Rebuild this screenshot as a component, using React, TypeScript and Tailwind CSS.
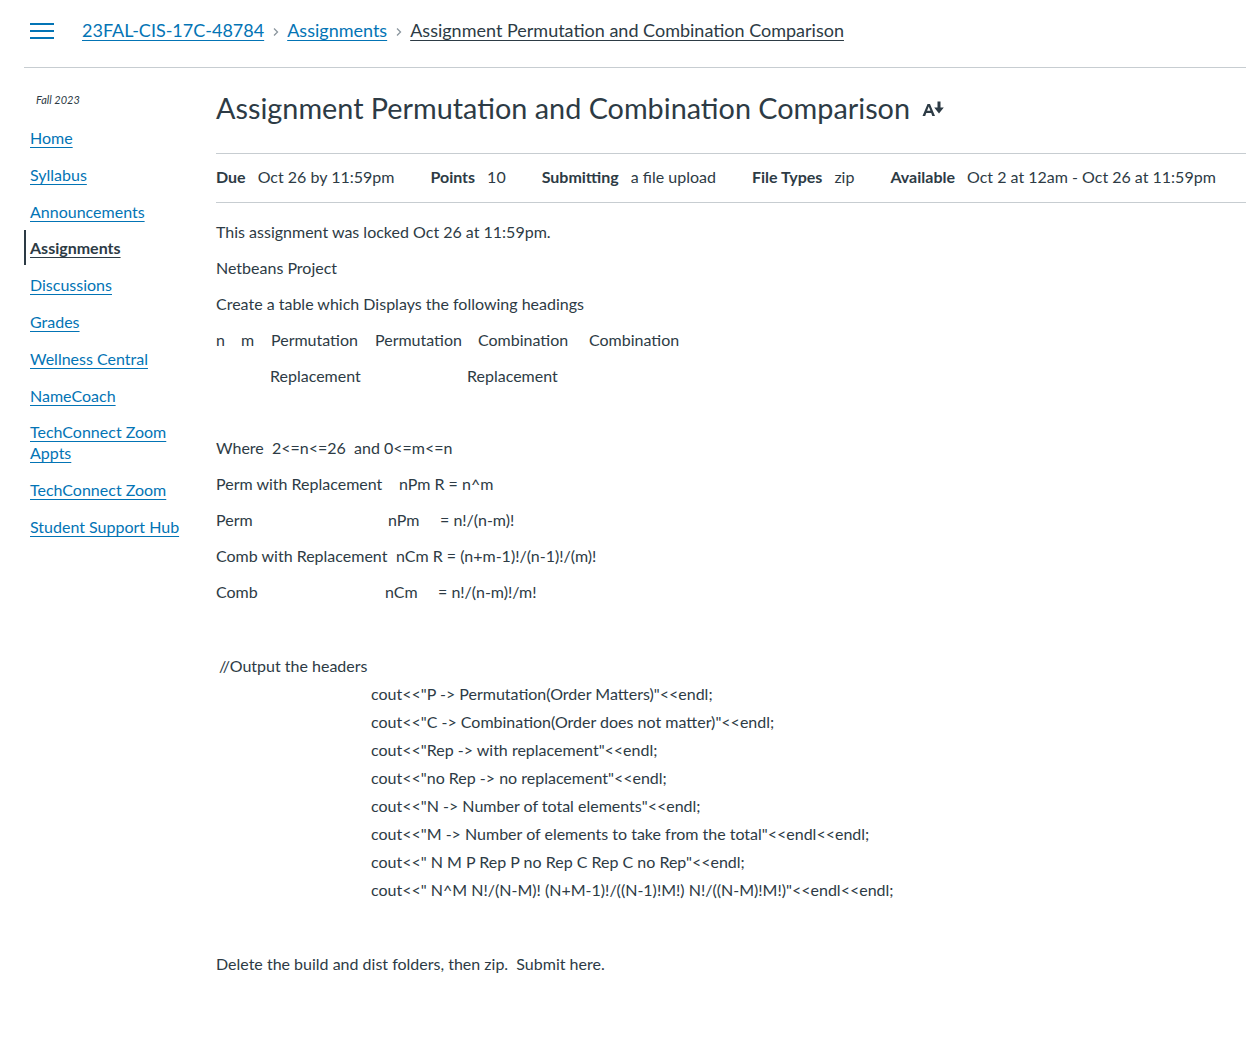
import React from 'react'

// Canvas-style assignment page, static content

const navItems = [
  'Home',
  'Syllabus',
  'Announcements',
  'Assignments',
  'Discussions',
  'Grades',
  'Wellness Central',
  'NameCoach',
  'TechConnect Zoom Appts',
  'TechConnect Zoom',
  'Student Support Hub',
]

const coutLines = [
  'cout<<"P -> Permutation(Order Matters)"<<endl;',
  'cout<<"C -> Combination(Order does not matter)"<<endl;',
  'cout<<"Rep -> with replacement"<<endl;',
  'cout<<"no Rep -> no replacement"<<endl;',
  'cout<<"N -> Number of total elements"<<endl;',
  'cout<<"M -> Number of elements to take from the total"<<endl<<endl;',
  'cout<<" N M P Rep P no Rep C Rep C no Rep"<<endl;',
  'cout<<" N^M N!/(N-M)! (N+M-1)!/((N-1)!M!) N!/((N-M)!M!)"<<endl<<endl;',
]

function Chevron() {
  return (
    <svg width="8" height="10" viewBox="0 0 8 10" className="ml-[8px] mr-[7px] mt-[2px]">
      <path d="M2 1.5 L5.5 5 L2 8.5" fill="none" stroke="#8b969e" strokeWidth="1.3" />
    </svg>
  )
}

export default function App() {
  return (
    <div className="min-h-[1042px] bg-white font-['Lato','Noto_Sans',sans-serif] text-[#2d3b45]">
      {/* header */}
      <div className="ml-6 flex h-[68px] items-start border-b border-[#c7cdd1]">
        <div className="flex h-[61px] items-center">
          <div className="ml-[6px] flex w-6 flex-col gap-[5px]">
            <span className="h-[2px] w-6 bg-[#0374b5]"></span>
            <span className="h-[2px] w-6 bg-[#0374b5]"></span>
            <span className="h-[2px] w-6 bg-[#0374b5]"></span>
          </div>
          <nav className="ml-[28px] flex items-center text-[18px]">
            <a href="#" className="text-[#0374b5] underline underline-offset-[3px]">23FAL-CIS-17C-48784</a>
            <Chevron />
            <a href="#" className="text-[#0374b5] underline underline-offset-[3px]">Assignments</a>
            <Chevron />
            <a href="#" className="text-[#2d3b45] underline underline-offset-[3px]">Assignment Permutation and Combination Comparison</a>
          </nav>
        </div>
      </div>

      <div className="flex">
        {/* sidebar */}
        <aside className="ml-6 w-[192px] shrink-0 pt-[24px]">
          <div className="pl-3 text-[11px] italic leading-4">Fall 2023</div>
          <ul className="mt-3 flex flex-col gap-[1.8px]">
            {navItems.map(item => (
              <li
                key={item}
                className={
                  item === 'Assignments'
                    ? 'border-l-2 border-[#2d3b45] py-[7px] pl-1'
                    : 'border-l-2 border-transparent py-[7px] pl-1'
                }
              >
                <a
                  href="#"
                  className={
                    item === 'Assignments'
                      ? 'block w-[156px] text-[16px] font-bold leading-[21px] text-[#2d3b45] underline underline-offset-[3px]'
                      : 'block w-[156px] text-[16px] leading-[21px] text-[#0374b5] underline underline-offset-[3px]'
                  }
                >
                  {item}
                </a>
              </li>
            ))}
          </ul>
        </aside>

        {/* main */}
        <main className="flex-1 pt-[22px]">
          <div className="flex items-center">
            <h1 className="text-[28.8px] leading-9 font-normal">Assignment Permutation and Combination Comparison</h1>
            <svg width="23" height="16" viewBox="0 0 23 16" className="ml-3 mt-[1px]">
              <path d="M0.5 15 L5.5 3 L8 3 L13 15 L10.3 15 L9.2 12 L4.3 12 L3.2 15 Z M5.1 9.8 L8.4 9.8 L6.75 5.5 Z" fill="#2d3b45" fillRule="evenodd" />
              <path d="M15.5 0.5 L18.5 0.5 L18.5 6.5 L21.8 6.5 L17 12.5 L12.2 6.5 L15.5 6.5 Z" fill="#2d3b45" />
            </svg>
          </div>

          <div className="mt-[27px] flex items-center border-y border-[#c7cdd1] pt-[11px] pb-[13px] text-[16px] leading-6">
            <div className="mr-9 flex"><span className="mr-3 font-bold">Due</span><span>Oct 26 by 11:59pm</span></div>
            <div className="mr-9 flex"><span className="mr-3 font-bold">Points</span><span>10</span></div>
            <div className="mr-9 flex"><span className="mr-3 font-bold">Submitting</span><span>a file upload</span></div>
            <div className="mr-9 flex"><span className="mr-3 font-bold">File Types</span><span>zip</span></div>
            <div className="flex"><span className="mr-3 font-bold">Available</span><span>Oct 2 at 12am - Oct 26 at 11:59pm</span></div>
          </div>

          <div className="pt-[17px] text-[16px] leading-6">
            <p className="mb-3">This assignment was locked Oct 26 at 11:59pm.</p>
            <p className="mb-3">Netbeans Project</p>
            <p className="mb-3">Create a table which Displays the following headings</p>
            <p className="mb-3 flex">
              <span className="w-[25px]">n</span>
              <span className="w-[30px]">m</span>
              <span className="w-[104px]">Permutation</span>
              <span className="w-[103px]">Permutation</span>
              <span className="w-[111px]">Combination</span>
              <span>Combination</span>
            </p>
            <p className="mb-3 flex pl-[54px]">
              <span className="w-[197px]">Replacement</span>
              <span>Replacement</span>
            </p>
            <p className="mb-3 h-6"></p>
            <p className="mb-3 whitespace-pre">Where  2&lt;=n&lt;=26  and 0&lt;=m&lt;=n</p>
            <p className="mb-3 flex">
              <span className="w-[183px]">Perm with Replacement</span>
              <span>nPm R = n^m</span>
            </p>
            <p className="mb-3 flex">
              <span className="w-[172px]">Perm</span>
              <span className="w-[52px]">nPm</span>
              <span>= n!/(n-m)!</span>
            </p>
            <p className="mb-3 flex">
              <span className="w-[180px]">Comb with Replacement</span>
              <span>nCm R = (n+m-1)!/(n-1)!/(m)!</span>
            </p>
            <p className="mb-3 flex">
              <span className="w-[169px]">Comb</span>
              <span className="w-[53px]">nCm</span>
              <span>= n!/(n-m)!/m!</span>
            </p>

            <p className="mt-[50px] pl-[3px]">//Output the headers</p>
            <div className="pl-[155px]">
              {coutLines.map(line => (
                <p key={line} className="mt-1 whitespace-pre">{line}</p>
              ))}
            </div>

            <p className="mt-[50px] whitespace-pre">Delete the build and dist folders, then zip.  Submit here.</p>
          </div>
        </main>
      </div>
    </div>
  )
}
